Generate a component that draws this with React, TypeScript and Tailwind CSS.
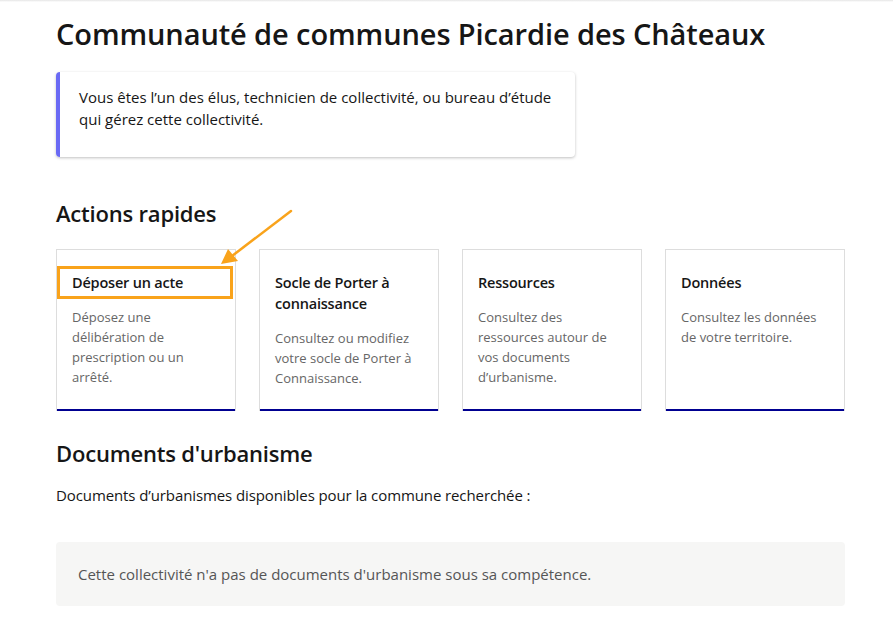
import React from "react";

type Action = { title: string; description: string };

const actions: Action[] = [
  { title: "Déposer un acte", description: "Déposez une délibération de prescription ou un arrêté." },
  { title: "Socle de Porter à connaissance", description: "Consultez ou modifiez votre socle de Porter à Connaissance." },
  { title: "Ressources", description: "Consultez des ressources autour de vos documents d’urbanisme." },
  { title: "Données", description: "Consultez les données de votre territoire." },
];

export default function App() {
  return (
    <div className="relative min-h-[627px] bg-white text-[#161616] font-['Open_Sans',sans-serif]">
      <div className="h-[2px] bg-gradient-to-b from-[#e5e5e5] to-white" />

      <main className="ml-[56px] w-[789px] pt-[12px]">
        <h1 className="text-[29px] leading-[40px] font-semibold tracking-[-0.1px]">
          Communauté de communes Picardie des Châteaux
        </h1>

        <div className="mt-[18px] flex w-[519px] overflow-hidden rounded-[4px] bg-white shadow-[0_1px_3px_rgba(0,0,0,0.25)]">
          <div className="w-[4px] shrink-0 bg-[#6a6af4]" />
          <p className="px-[19px] pt-[14px] pb-[27px] text-[15px] leading-[22px]">
            Vous êtes l’un des élus, technicien de collectivité, ou bureau d’étude qui gérez cette collectivité.
          </p>
        </div>

        <h2 className="mt-[40px] text-[22px] leading-[32px] font-semibold tracking-[-0.2px]">Actions rapides</h2>

        <div className="relative mt-[20px] grid grid-cols-4 gap-[23px]">
          {actions.map((action, i) => (
            <ActionTile key={action.title} action={action} highlighted={i === 0} />
          ))}
        </div>

        <h2 className="mt-[26px] text-[22px] leading-[32px] font-semibold tracking-[-0.2px]">Documents d'urbanisme</h2>

        <p className="mt-[14px] text-[15px] leading-[24px] tracking-[-0.1px]">
          Documents d’urbanismes disponibles pour la commune recherchée :
        </p>

        <div className="mt-[35px] rounded-[4px] bg-[#f6f6f5] px-[22px] py-[20px]">
          <p className="text-[15px] leading-[24px] text-[#555]">
            Cette collectivité n'a pas de documents d'urbanisme sous sa compétence.
          </p>
        </div>
      </main>

      {/* annotation arrow */}
      <svg className="absolute left-0 top-0" width="893" height="627" viewBox="0 0 893 627" fill="none">
        <line x1="291" y1="211" x2="232" y2="256" stroke="#f9a31b" strokeWidth="2.5" strokeLinecap="round" />
        <polygon points="221,264 228,249 238,261" fill="#f9a31b" />
      </svg>
    </div>
  );
}

function ActionTile({ action, highlighted }: { action: Action; highlighted: boolean }) {
  return (
    <div className="relative h-[162px] border border-b-0 border-[#dddddd] px-[15px] pt-[22px] shadow-[inset_0_-2px_0_#000091]">
      <h3 className="text-[14.5px] leading-[21px] font-semibold tracking-[-0.2px]">{action.title}</h3>
      <p className="mt-[14px] text-[13px] leading-[20px] text-[#666]">{action.description}</p>
      {highlighted ? (
        <div className="absolute left-0 top-[16px] h-[33px] w-[176px] border-[3px] border-[#f9a31b]" />
      ) : null}
    </div>
  );
}
